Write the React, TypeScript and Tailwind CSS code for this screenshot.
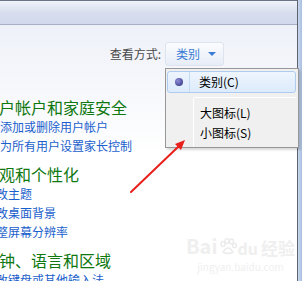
import React from 'react'

const FONT = '"Microsoft YaHei", "Noto Sans CJK SC", "Noto Sans", sans-serif'

const groups = [
  { title: '用户帐户和家庭安全', indent: 'ml-[-17px]', linkIndent: 'ml-0', links: ['添加或删除用户帐户', '为所有用户设置家长控制'] },
  { title: '外观和个性化', indent: 'ml-[-17px]', linkIndent: 'ml-[-16px]', links: ['更改主题', '更改桌面背景', '调整屏幕分辨率'] },
  { title: '时钟、语言和区域', indent: 'ml-[-17px]', linkIndent: 'ml-[-16px]', links: ['更改键盘或其他输入法'] },
]

function ViewMenu() {
  return (
    <div className="absolute left-[165px] top-[68px] w-[134px] h-[80px] border border-[#979797] bg-[#f0f0f0] shadow-[2px_2px_2px_rgba(0,0,0,0.15)]">
      <div className="absolute left-[27px] top-[29px] bottom-0 w-px bg-[#e2e3e3] border-r border-white" />
      <div className="flex flex-col pt-[2px] pl-[1px] pr-[2px]">
        <div className="flex items-center h-[22px] rounded-[3px] border border-[#aeccf0] bg-gradient-to-b from-[#eef5fd] to-[#dcebfc]">
          <div className="w-[22px] h-full flex items-center justify-center border-r border-[#c5daf3]">
            <span className="block w-[8px] h-[8px] rounded-full bg-[radial-gradient(circle_at_35%_35%,#8f8fd8,#2a2a7a)]" />
          </div>
          <span className="ml-[9px] text-[12px] text-black leading-none">类别(C)</span>
        </div>
        <div className="ml-[27px] mt-[4px] h-px bg-[#e2e3e3] border-b border-white" />
        <div className="flex items-center h-[20px] mt-[5px] pl-[33px] text-[12px] text-black">大图标(L)</div>
        <div className="flex items-center h-[20px] pl-[33px] text-[12px] text-black">小图标(S)</div>
      </div>
    </div>
  )
}

function RedArrow() {
  return (
    <svg className="absolute left-0 top-0" width="302" height="281" viewBox="0 0 302 281">
      <line x1="131" y1="192" x2="179" y2="146" stroke="#e8201c" strokeWidth="2" strokeLinecap="round" />
      <polygon points="185,140 175,144 181,150" fill="#e8201c" />
    </svg>
  )
}

function PawMark() {
  return (
    <svg width="18" height="18" viewBox="0 0 18 18" className="mx-[1px]">
      <g fill="none" stroke="#ececec" strokeWidth="1.5">
        <ellipse cx="4" cy="6" rx="2" ry="2.5" />
        <ellipse cx="8" cy="3" rx="2" ry="2.5" />
        <ellipse cx="12.5" cy="3.5" rx="2" ry="2.5" />
        <ellipse cx="15.5" cy="7.5" rx="1.8" ry="2.3" />
        <path d="M4 14 Q9 6 14 14 Q9 17 4 14 Z" />
      </g>
    </svg>
  )
}

export default function App() {
  return (
    <div className="relative w-[302px] h-[281px] overflow-hidden bg-white" style={{ fontFamily: FONT }}>
      <div className="flex h-full">
        <div className="flex-1 flex flex-col min-w-0 overflow-hidden">
          <div className="shrink-0 h-[25px] border-t border-[#6b7485] border-b border-b-[#a9b0c5] bg-gradient-to-b from-[#f1f3f9] via-[#d8deef] to-[#d2d9ec]" />
          <div className="shrink-0 bg-gradient-to-b from-[#eef1f8] via-white to-white">
            <div className="flex items-center justify-end pr-[73px] mt-[17px]">
              <span className="text-[12px] text-[#4a4a4a] mr-[4px]">查看方式:</span>
              <div className="flex items-center h-[24px] w-[59px] pl-[10px] rounded-[3px] border border-[#dde4ee] bg-gradient-to-b from-[#fbfcfe] to-[#e7edf7]">
                <span className="text-[12px] text-[#3a7bd5]">类别</span>
                <span className="ml-[8px] w-0 h-0 border-l-[4px] border-r-[4px] border-t-[4px] border-l-transparent border-r-transparent border-t-[#3a7bd5]" />
              </div>
            </div>
            <div className="flex flex-col mt-[31px]">
              {groups.map((g, i) => (
                <div key={g.title} className={i === 0 ? '' : 'mt-[9px]'}>
                  <div className={`${g.indent} text-[16px] leading-[20px] text-[#0f780f] whitespace-nowrap`}>{g.title}</div>
                  {g.links.map((l) => (
                    <div key={l} className={`${g.linkIndent} text-[12px] leading-[19px] text-[#1b5fcc] whitespace-nowrap`}>{l}</div>
                  ))}
                </div>
              ))}
            </div>
          </div>
        </div>
        <div className="shrink-0 w-[5px] border-l border-[#5c6472] bg-gradient-to-r from-[#c9d7ec] to-[#a9bfe0]" />
      </div>

      <div className="absolute left-[186px] top-[236px] flex flex-col items-center text-[#efefef] leading-none select-none">
        <span className="flex items-end h-[20px] text-[20px] font-bold">Bai<PawMark /><span className="text-[16px]">du</span><span className="ml-[3px] text-[17px]">经验</span></span>
        <span className="text-[10px] mt-[6px]">jingyan.baidu.com</span>
      </div>

      <ViewMenu />
      <RedArrow />
    </div>
  )
}
